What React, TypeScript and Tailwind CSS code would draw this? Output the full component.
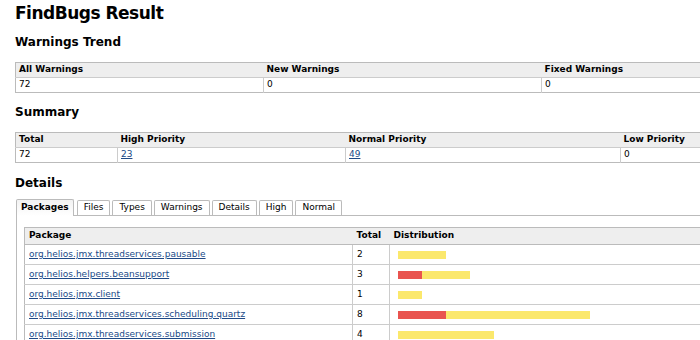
const font = { fontFamily: '"DejaVu Sans", Verdana, sans-serif' }

type Pkg = { name: string; total: number; high: number; normal: number }

const packages: Pkg[] = [
  { name: "org.helios.jmx.threadservices.pausable", total: 2, high: 0, normal: 2 },
  { name: "org.helios.helpers.beansupport", total: 3, high: 1, normal: 2 },
  { name: "org.helios.jmx.client", total: 1, high: 0, normal: 1 },
  { name: "org.helios.jmx.threadservices.scheduling.quartz", total: 8, high: 2, normal: 6 },
  { name: "org.helios.jmx.threadservices.submission", total: 4, high: 0, normal: 4 },
]

const tabs = ["Packages", "Files", "Types", "Warnings", "Details", "High", "Normal"]

function Link({ children }: { children: React.ReactNode }) {
  return <a href="#" className="text-[#204a87] underline underline-offset-1">{children}</a>
}

function SimpleTable({ headers, values, widths }: { headers: string[]; values: React.ReactNode[]; widths: string[] }) {
  return (
    <table className="w-[820px] border-collapse border border-[#bbb] text-[9px] text-black">
      <thead>
        <tr className="bg-[#eeeeee] h-[15px]">
          {headers.map((h, i) => (
            <th key={h} className={`text-left font-bold px-[3px] py-0 border-b border-[#ccc] ${widths[i]}`}>{h}</th>
          ))}
        </tr>
      </thead>
      <tbody>
        <tr className="h-[15px]">
          {values.map((v, i) => (
            <td key={i} className="px-[3px] py-0 border-l border-[#ccc] first:border-l-0">{v}</td>
          ))}
        </tr>
      </tbody>
    </table>
  )
}

export default function App() {
  return (
    <div className="w-[700px] h-[340px] overflow-hidden bg-white pl-[15px] pt-[2px] text-black" style={font}>
      <h1 className="text-[17px] font-bold leading-[22px] tracking-[-0.5px]">FindBugs Result</h1>

      <h2 className="text-[12px] font-bold mt-[10px] leading-[16px]">Warnings Trend</h2>
      <div className="mt-[12px]">
        <SimpleTable
          headers={["All Warnings", "New Warnings", "Fixed Warnings"]}
          values={["72", "0", "0"]}
          widths={["w-[248px]", "w-[278px]", ""]}
        />
      </div>

      <h2 className="text-[12px] font-bold mt-[11px] leading-[16px]">Summary</h2>
      <div className="mt-[12px]">
        <SimpleTable
          headers={["Total", "High Priority", "Normal Priority", "Low Priority"]}
          values={["72", <Link>23</Link>, <Link>49</Link>, "0"]}
          widths={["w-[102px]", "w-[228px]", "w-[275px]", ""]}
        />
      </div>

      <h2 className="text-[12px] font-bold mt-[12px] leading-[16px]">Details</h2>

      <div className="mt-[7px] ml-[1px]">
        <div className="flex items-end gap-[2px] text-[9px] pl-0">
          {tabs.map((t, i) => (
            <div
              key={t}
              className={
                i === 0
                  ? "h-[17px] px-[4px] mr-[1px] flex items-center font-bold border border-b-0 border-[#bbb] rounded-t-[2px] bg-gradient-to-b from-[#f2f2f2] to-white relative top-[1px]"
                  : "h-[15px] px-[6px] flex items-center border border-b-0 border-[#bbb] rounded-t-[2px] bg-white"
              }
            >
              {t}
            </div>
          ))}
        </div>
        <div className="border-l border-t border-[#bbb] pl-[7px] pt-[11px] w-[900px]">
          <table className="w-[820px] border-collapse border border-[#bbb] text-[9px]">
            <thead>
              <tr className="bg-[#eeeeee] h-[17px]">
                <th className="text-left font-bold px-[4px] w-[328px] border-b border-[#bbb]">Package</th>
                <th className="text-left font-bold px-[4px] w-[37px] border-b border-[#bbb]">Total</th>
                <th className="text-left font-bold px-[4px] border-b border-[#bbb]">Distribution</th>
              </tr>
            </thead>
            <tbody>
              {packages.map((p) => (
                <tr key={p.name} className="h-[20px] border-b border-[#ccc]">
                  <td className="px-[4px]"><Link>{p.name}</Link></td>
                  <td className="px-[4px] border-l border-[#ccc]">{p.total}</td>
                  <td className="pl-[8px] border-l border-[#ccc]">
                    <div className="flex h-[8px]">
                      {p.high > 0 && <div className="bg-[#e9544f]" style={{ width: p.high * 24 }} />}
                      {p.normal > 0 && <div className="bg-[#fbe86c]" style={{ width: p.normal * 24 }} />}
                    </div>
                  </td>
                </tr>
              ))}
            </tbody>
          </table>
        </div>
      </div>
    </div>
  )
}
